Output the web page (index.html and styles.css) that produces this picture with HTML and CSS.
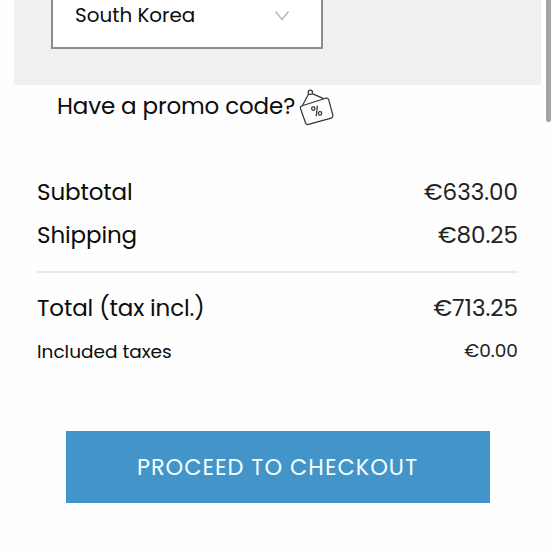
FILE: index.html
```html
<!DOCTYPE html>
<html lang="en">
<head>
    <meta charset="UTF-8">
    <title>Cart</title>
    <link rel="stylesheet" href="styles.css">
</head>
<body>
    <div class="cart">
        <!-- Shipping country -->
        <div class="shipping-panel">
            <div class="country-select">
                <span class="country-name">South Korea</span>
                <svg class="chevron" width="16" height="12" viewBox="0 0 16 12">
                    <path d="M1.5 1.5 L8 9.5 L14.5 1.5" fill="none" stroke="#b4b4b4" stroke-width="1.3"/>
                </svg>
            </div>
        </div>

        <!-- Promo code -->
        <div class="promo">
            <span class="promo-text">Have a promo code?</span>
            <svg class="promo-icon" width="36" height="38" viewBox="0 0 36 38" fill="none" stroke="#333" stroke-width="1.2">
                <circle cx="12.3" cy="4.3" r="2.2"/>
                <path d="M10.6 6 L4.2 18 M14.2 5.6 L25.6 10.6"/>
                <path d="M4.2 17.8 L27.6 10.2 Q30 9.5 30.7 11.7 L34.8 27 Q35.3 29.3 33.2 30.1 L10.5 36.4 Q8.2 37 7.5 34.8 L2.5 20.5 Q1.9 18.5 4.2 17.8 Z"/>
                <circle cx="15.3" cy="20.6" r="1.7"/>
                <circle cx="22" cy="25.4" r="1.7"/>
                <path d="M19.4 17.6 L18.2 28.2"/>
            </svg>
        </div>

        <!-- Totals -->
        <div class="totals">
            <div class="row"><span class="label">Subtotal</span><span class="value">€633.00</span></div>
            <div class="row"><span class="label">Shipping</span><span class="value">€80.25</span></div>
            <div class="divider"></div>
            <div class="row"><span class="label">Total (tax incl.)</span><span class="value">€713.25</span></div>
            <div class="row taxes"><span>Included taxes</span><span class="value taxes-value">€0.00</span></div>
        </div>

        <button class="checkout">PROCEED TO CHECKOUT</button>
    </div>
    <div class="scrollbar"></div>
</body>
</html>
```

FILE: styles.css
```css
body {
    margin: 0;
    height: 555px;
    overflow: hidden;
    background-color: #fefefe;
    color: #0c0c0c;
    font-family: Poppins, Inter, sans-serif;
    font-size: 23px;
}
.cart {
    display: flex;
    flex-direction: column;
}
.shipping-panel {
    height: 85px;
    margin: 0 14px;
    padding-left: 37px;
    background-color: #f0f0f0;
}
.country-select {
    display: flex;
    justify-content: space-between;
    box-sizing: border-box;
    width: 272px;
    height: 49px;
    padding: 0 31px 0 22px;
    border: 2px solid #8c8c8c;
    border-top: 0;
    background-color: #fff;
    font-size: 19.9px;
    line-height: 31px;
}
.chevron {
    margin-top: 10px;
}
.promo {
    display: flex;
    height: 42px;
    padding-left: 57px;
    line-height: 42px;
}
.promo-text {
    width: 241px;
    letter-spacing: -0.13px;
    white-space: nowrap;
}
.promo-icon {
    margin-top: 3px;
}
.totals {
    margin: 44px 37px 0;
}
.row {
    display: flex;
    justify-content: space-between;
    height: 43px;
    line-height: 43px;
}
.label {
    letter-spacing: -0.12px;
}
.value {
    color: #222;
}
.divider {
    height: 2px;
    margin: 14px 0;
    background-color: #e9e9e9;
}
.taxes {
    height: 44px;
    line-height: 44px;
    font-size: 18.5px;
}
.taxes-value {
    line-height: 42px;
}
.checkout {
    width: 424px;
    height: 72px;
    margin: 57px 0 0 65.5px;
    padding: 0;
    border: 0;
    background-color: #4294c9;
    color: #f4ffff;
    font-family: inherit;
    font-size: 22.5px;
    letter-spacing: 0.95px;
}
.scrollbar {
    position: absolute;
    top: 0;
    right: 4px;
    width: 5px;
    height: 122px;
    border-radius: 0 0 3px 3px;
    background-color: #a5a5a5;
}
```
